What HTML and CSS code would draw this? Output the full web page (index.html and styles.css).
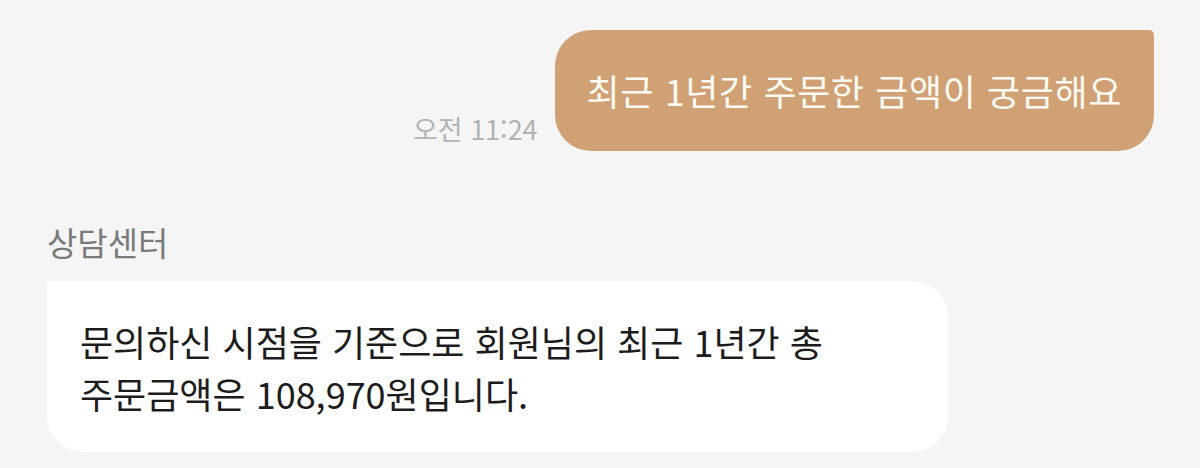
FILE: index.html
```html
<!DOCTYPE html>
<html lang="ko">
<head>
    <meta charset="UTF-8">
    <meta name="viewport" content="width=device-width, initial-scale=1.0">
    <title>상담 채팅</title>
    <link rel="stylesheet" href="styles.css">
</head>
<body>

    <div class="chat">
        <!-- 고객 메시지 -->
        <div class="row mine">
            <span class="time">오전 11:24</span>
            <div class="bubble bubble-mine">최근 1년간 주문한 금액이 궁금해요</div>
        </div>

        <!-- 상담센터 답변 -->
        <div class="row theirs">
            <div class="sender">상담센터</div>
            <div class="bubble bubble-theirs">
                문의하신 시점을 기준으로 회원님의 최근 1년간 총<br>
                주문금액은 108,970원입니다.
            </div>
        </div>
    </div>

</body>
</html>
```

FILE: styles.css
```css
body {
    margin: 0;
    background-color: #f5f5f5;
    font-family: "Noto Sans CJK KR", "Noto Sans", sans-serif;
}

.chat {
    display: flex;
    flex-direction: column;
    padding: 30px 46px 0 47px;
}

.row {
    display: flex;
}

.row.mine {
    justify-content: flex-end;
    align-items: flex-end;
    gap: 17px;
}

.row.theirs {
    flex-direction: column;
    align-items: flex-start;
    margin-top: 70px;
}

.time {
    color: #b3b3b3;
    font-size: 27px;
    line-height: 34px;
    margin-bottom: 5px;
}

.bubble {
    font-size: 36px;
    line-height: 52px;
}

.bubble-mine {
    background-color: #cfa174;
    color: #fffaf2;
    letter-spacing: 0.6px;
    padding: 34px 32px 35px;
    border-radius: 36px 5px 36px 36px;
}

.sender {
    color: #7a7a7a;
    font-size: 33px;
    line-height: 42px;
    margin-bottom: 18px;
}

.bubble-theirs {
    background-color: #ffffff;
    color: #1c1c1c;
    width: 901px;
    box-sizing: border-box;
    padding: 34px 33px 33px;
    border-radius: 5px 36px 36px 36px;
}
```
